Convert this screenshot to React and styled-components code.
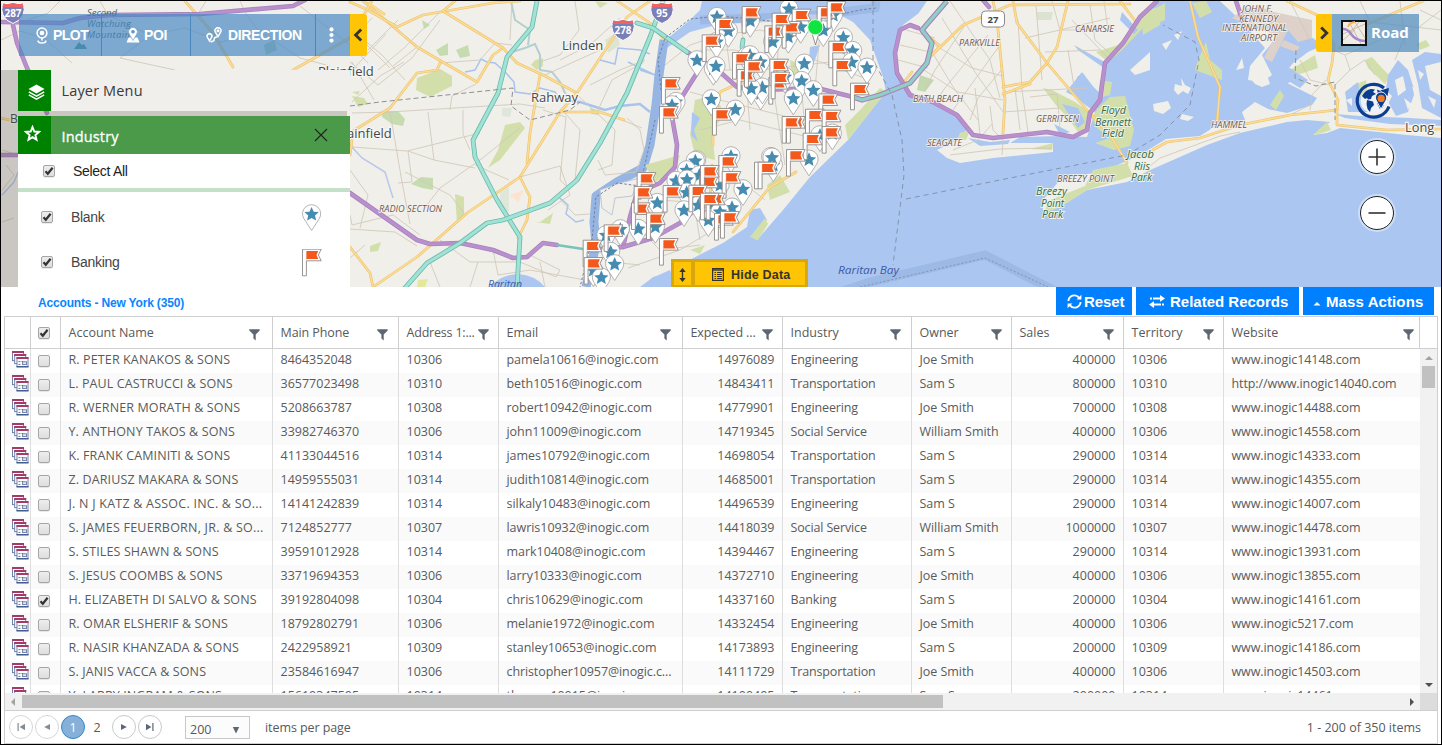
import React from "react";
import styled, { createGlobalStyle, css } from "styled-components";

const UI = `"Open Sans", "Noto Sans", sans-serif`;
const ARIAL = `"Liberation Sans", Arial, sans-serif`;

const GlobalStyle = createGlobalStyle`
  * { box-sizing: border-box; }
  body { margin: 0; background: #fff; font-family: ${UI}; color: #5a5a5a; }
  #root { height: 745px; }
`;

const Screen = styled.div`
  width: 1442px;
  height: 745px;
  border: 1px solid #000;
  overflow: hidden;
  display: flex;
  flex-direction: column;
  background: #fff;
`;

/* ---------- map ---------- */

const MapPanel = styled.section`
  position: relative;
  height: 286px;
  flex: none;
  overflow: hidden;
`;
const MapSvg = styled.svg`
  display: block;
  width: 1440px;
  height: 286px;
`;

const WATER = "#abc7f1";
const LAND = "#f1efea";
const GREEN = "#d3dfab";

const Road = ({ d, kind }) => {
  const k = {
    teal: ["#68b9ad", 4.8, "#a0e2d4", 3.2],
    purple: ["#a683bb", 4.6, "#b98fcd", 3.2],
    orange: ["#ecc069", 2.7, "#fbdc94", 1.6],
  }[kind];
  return (
    <g fill="none" strokeLinejoin="round" strokeLinecap="round">
      <path d={d} stroke={k[0]} strokeWidth={k[1]} />
      <path d={d} stroke={k[2]} strokeWidth={k[3]} />
    </g>
  );
};

const minorRoads = [
  "M1 40L20 31L44 38L72 63M60 1L48 13L22 22M100 1L108 15L150 35L185 28L222 42M150 35L120 58L175 70M222 42L258 30L300 58L330 66M240 1L246 14L258 30M198 14L206 1M300 6L350 45L368 63",
  "M350 62L378 85L412 58L440 20M350 28L382 55L405 80M368 50L398 20M352 102L380 76L404 62M362 40L390 68M372 18L350 42M386 34L356 66M440 12L404 48L378 70M417 47L393 66",
  "M352 147L407 151L480 133M352 113L390 112L520 104L545 108M390 112L402 182L410 224M408 151L412 182L398 183M428 112L434 160L475 168M463 110L463 134L470 150M434 160L408 151M350 215L352 225L393 215L420 235M440 63L480 60L495 43L512 45M450 110L452 96L476 84M426 206L440 188L480 160L520 128M520 177L560 166L570 195L548 210M543 110L566 117L560 180L570 190M475 165L509 180M464 213L450 195L405 172",
  "M575 1L579 30L560 55L540 62M512 1L510 40M620 18L590 45L560 60M545 75L600 50M590 85L620 70L645 60M575 93L615 130L612 165L598 170M627 118L640 130L644 150L636 172L605 175L598 160M617 118L642 128M564 112L580 130L575 180M440 240L470 262L520 262L556 277L560 270L530 255M540 262L545 287M470 287L478 262M493 250L498 275L530 270L585 280M430 262L440 287M350 229L395 232L417 246M556 195L575 215L590 214",
  "M665 65L690 45L720 35L760 30L800 40M690 92L720 100L760 110L800 120L840 118M700 130L740 120L780 130L820 140M740 10L745 60L750 130M780 20L775 100L785 165M820 30L815 90M720 70L760 70L830 62M640 230L660 250L700 245M628 268L680 250L730 220M690 180L700 240M610 262L640 265M660 200L730 205M740 180L765 200M815 60L870 80M598 110L612 80L644 62M700 50L735 50L770 62M725 30L730 70M800 70L805 130L820 150",
  "M906 30L935 38M900 45L930 52M898 60L928 68M950 1L990 60L1000 98M942 18L975 72L1003 112M932 52L955 90L978 120M965 25L935 70L925 90M988 35L945 88L938 98M1000 45L960 100L953 110M1003 68L978 98L970 120M924 70L958 92L1003 100M935 45L972 68L1003 76M975 88L980 134M1003 92L1088 88M1018 20L1022 90L1028 132M1036 5L1042 80M1052 1L1060 30L1110 18M1045 52L1100 50M1025 38L1060 30L1092 30M1068 50L1075 92M1090 5L1095 40L1113 56M1104 1L1108 30M1072 20L1110 60M1030 97L1057 94L1060 128M950 155L1000 149L1052 148M953 150L978 140L992 124M990 106L993 130L1003 140L1002 155M1003 112L1060 108M1015 88L1020 130",
  "M1290 1L1310 40L1345 55L1380 40M1345 55L1350 70L1335 85M1300 60L1310 80L1330 85M1360 1L1370 22L1441 30M1400 1L1405 45M1420 10L1441 20M1310 110L1312 95L1326 80M1290 115L1310 105M1350 70L1365 60L1375 75M1395 60L1405 35M1150 166L1160 158L1220 136L1240 132M1441 10L1418 28",
  "M2 150L18 155M2 222L14 218M2 190L14 175L6 165M350 170L368 195L360 228M352 62L374 100M365 245L350 258",
];

const orangeRoads = [
  "M363 1L417 47L477 82L493 55L503 48",
  "M350 2L368 10L397 27L423 15L493 3L520 1",
  "M455 1L443 11L503 48L517 63L543 75L577 93",
  "M350 133L390 108L417 73L437 70L440 63",
  "M540 75L530 133L527 163",
  "M650 1L627 17L577 93L560 112L520 177L467 213L417 257L373 287",
  "M520 177L530 197L527 220L518 238",
  "M560 112L600 112L624 120",
  "M617 1L650 23L665 40",
  "M350 247L370 273L373 287",
  "M352 140L350 155",
  "M185 1L213 33L233 67",
  "M368 3L384 14M293 70L350 38L372 1",
  "M1 118L18 122",
  "M1013 1L1017 23L1047 63L1087 110L1110 135L1127 163",
  "M993 1L997 20L1005 100L1003 133",
  "M904 82L912 72M918 28L940 46L930 57M930 57L963 25L1010 5L1130 4",
  "M1003 87L1030 82L1047 63L1057 47L1068 1M1003 94L1030 84",
  "M1120 1L1136 22",
  "M1190 1L1198 37L1220 87L1217 123",
  "M1140 157L1167 142L1200 138L1240 125L1290 115L1337 110L1338 100L1328 80L1332 63L1334 45L1317 15L1287 1",
  "M1337 110L1337 125L1387 130L1441 129",
  "M1340 48L1353 30L1423 1",
  "M713 145L713 127L720 92L745 80L790 90",
  "M712 165L710 200M733 232L770 187L796 172",
];

const tealRoads = [
  "M537 1L532 27L507 57L498 93L473 140L475 157L497 200L520 237L517 287",
  "M663 1L650 37L627 93L600 143L577 180L550 203L503 220L487 223L460 243L427 263L403 290",
  "M637 23L653 28L687 52",
  "M743 40L742 47",
];

const purpleRoads = [
  "M1 22L63 23L80 18L110 15L200 14L293 6L305 0",
  "M13 25L17 43L27 68L47 113",
  "M1 155L18 155",
  "M350 193L417 240L430 244L460 243L493 250L513 258L527 257L543 243L557 245",
  "M697 73L680 100L672 117L677 145L675 167L660 183L637 193L630 217L623 247",
  "M587 250L623 247L653 238L680 223L700 205",
  "M687 52L720 72L737 87L760 90L817 88L853 97",
  "M918 28L910 25L900 30L895 53L897 73L910 95L933 102L957 115L973 135L993 138L1047 132L1073 137L1087 130L1090 113L1100 100L1105 63L1123 43L1140 17L1157 1",
  "M983 0L989 7",
  "M1236 1L1243 22",
];

const STAR = "M0 -7L2.1 -2.3L7.2 -1.9L3.4 1.5L4.5 6.6L0 3.9L-4.5 6.6L-3.4 1.5L-7.2 -1.9L-2.1 -2.3Z";

const StarPin = ({ x, y }) => (
  <g transform={`translate(${x} ${y})`}>
    <path d="M0 16.5L-7.6 4.8A9.1 9.1 0 1 1 7.6 4.8Z" fill="#fff" stroke="#a3a19f" strokeWidth="0.8" />
    <path d={STAR} fill="#458cb0" />
  </g>
);
const FlagPin = ({ x, y }) => (
  <g transform={`translate(${x} ${y})`}>
    <path d="M-9.5 -5.8H9.2L6.4 0L9.2 5.8H-5.6V20.8H-9.5Z" fill="#fff" stroke="#8d8986" strokeWidth="0.9" />
    <path d="M-5.6 5.5V-3.5" stroke="#bbb" strokeWidth="0.6" />
    <path d="M-5.5 -4.1H6.2L4.5 0L6.2 4.1H-5.5Z" fill="#f4581b" />
  </g>
);

const at = (ox, oy) => ([x, y]) => [ox + x / 3, oy + y / 3];
const upper = at(570, 0);
const lower = at(570, 140);

const starPins = [
  ...[[441,50],[475,92],[440,125],[541,62],[657,26],[790,45],[655,110],[608,125],[692,80],[760,90],[820,112],[848,152],[845,186],[891,202],[381,180],[430,206],[438,198],[530,168],[540,165],[572,185],[703,190],[695,242],[730,270],[645,230],[670,295],[572,280],[577,262],[544,265],[424,297],[496,328],[318,305],[306,315],[750,405],[787,400]].map(upper),
  ...[[380,60],[376,62],[483,48],[610,75],[602,50],[606,52],[717,58],[350,90],[318,122],[388,105],[351,118],[350,157],[450,135],[519,147],[262,188],[385,195],[342,210],[430,190],[486,202],[450,215],[415,240],[256,260],[205,266],[151,267],[108,285],[122,335],[70,390],[134,372],[94,412]].map(lower),
];
const flagPins = [
  ...[[545,37],[465,72],[425,122],[695,45],[665,82],[613,95],[635,57],[770,37],[800,22],[530,226],[516,175],[552,199],[625,250],[628,195],[632,234],[805,141],[817,195],[870,267],[303,250],[297,337],[456,343],[775,299],[735,345],[785,348],[678,367],[665,367],[785,397],[728,417]].map(upper),
  ...[[475,64],[417,126],[420,94],[485,112],[582,84],[593,84],[678,46],[230,115],[213,206],[221,157],[308,154],[385,153],[437,177],[420,177],[258,236],[131,272],[68,318],[71,370],[462,238],[480,232],[297,313]].map(lower),
];

const labels = [
  { x: 562, y: 50, s: 13, t: "Linden" },
  { x: 531, y: 102, s: 13, t: "Rahway" },
  { x: 318, y: 76, s: 13, t: "Plainfield" },
  { x: 336, y: 138, s: 13, t: "Plainfield" },
  { x: 10, y: 123, s: 12, t: "B" },
  { x: 1405, y: 132, s: 12.8, t: "Long" },
];
const italics = [
  { x: 379, y: 212, w: 63, t: "RADIO SECTION" },
  { x: 959, y: 46, w: 41, t: "PARKVILLE" },
  { x: 1075, y: 32, w: 39, t: "CANARSIE" },
  { x: 913, y: 102, w: 50, t: "BATH BEACH" },
  { x: 927, y: 146, w: 35, t: "SEAGATE" },
  { x: 1036, y: 122, w: 43, t: "GERRITSEN" },
  { x: 1057, y: 182, w: 57, t: "BREEZY POINT" },
  { x: 1211, y: 128, w: 36, t: "HAMMEL" },
  { x: 1242, y: 12, w: 31, t: "JOHN F." },
  { x: 1239, y: 21.5, w: 39, t: "KENNEDY" },
  { x: 1222, y: 31, w: 65, t: "INTERNATIONAL" },
  { x: 1241, y: 41, w: 36, t: "AIRPORT" },
];
const parks = [
  { x: 1101, y: 114, w: 25, t: "Floyd" },
  { x: 1095, y: 126, w: 36, t: "Bennett" },
  { x: 1102, y: 137, w: 22, t: "Field" },
  { x: 1127, y: 158, w: 27, t: "Jacob" },
  { x: 1134, y: 170, w: 16, t: "Riis" },
  { x: 1131, y: 181, w: 21, t: "Park" },
  { x: 1036, y: 195, w: 31, t: "Breezy" },
  { x: 1041, y: 207, w: 23, t: "Point" },
  { x: 1042, y: 218, w: 21, t: "Park" },
];

const Shield = ({ x, y, n }) => (
  <g transform={`translate(${x} ${y})`}>
    <path d="M-10 -9Q-5 -7.5 0 -9.5Q5 -7.5 10 -9Q12.5 -2 10 3Q7 9 0 11.5Q-7 9 -10 3Q-12.5 -2 -10 -9Z" fill="#7b7fb8" stroke="#fff" strokeWidth="1" />
    <path d="M-9.6 -8.6Q-5 -7 0 -9Q5 -7 9.6 -8.6L10.6 -5H-10.6Z" fill="#ee6465" />
    <text x="0" y="5.2" textAnchor="middle" fontFamily={UI} fontWeight="700" fontSize="10" fill="#fff">{n}</text>
  </g>
);

const VERRAZZANO = "M853 97L862 100L880 95L910 83L927 63L932 43L922 30L947 1";

const MapCanvas = () => (
  <MapSvg viewBox="1 1 1440 286" aria-label="Map">
    <rect x="1" y="1" width="1440" height="286" fill={LAND} />
    {/* parks west of the bay */}
    <g fill={GREEN}>
      <path d="M417 78L440 69L452 76L452 86L430 97L416 90Z" />
      <path d="M436 50L448 43L448 55L440 56ZM456 50L468 45L470 56L460 58ZM422 20L430 25L424 29Z" fill="#c6dcb0" />
      <path d="M382 111L398 111L405 119L403 126L392 124L382 117ZM411 184L421 177L433 178L433 190L422 188Z" fill="#c6dcb0" />
      <path d="M455 194L464 197L464 215L457 223Z" />
      <path d="M505 125L520 122L525 128L500 160L488 168L498 150Z" />
      <path d="M540 222L553 213L550 224L535 222ZM535 60L543 58L543 66L537 70L531 65ZM590 108L602 111L598 115L591 114Z" />
      <path d="M370 246L381 242L378 251L370 252ZM352 96L364 98L368 104L358 107ZM352 92L360 91L358 95ZM595 1L608 3L600 8Z" />
      <path d="M605 40L617 32L620 45L608 53Z" fill="#dde5d0" />
      <path d="M500 193L509 187L509 212L500 208ZM502 108L512 108L510 117L502 116Z" fill="#dfe6da" />
      <path d="M264 45L274 40L277 50L266 55Z" fill="#b8d0b0" />
      <path d="M418 280L428 279L425 287L417 287Z" fill="#e3e89c" />
    </g>
    <path d="M510 195L524 190L518 202Z" fill="#fbe3cf" />
    <g fill="none" stroke="#a9c3ec" strokeWidth="1.5">
      <path d="M465 72L475 70L481 59L487 62L495 63L506 73L514 82L515 92L530 94L540 88L555 92L562 103" />
      <path d="M512 52L525 48L535 44L540 55L540 70L552 72L560 82L566 95M511 1L515 20L530 30L528 45" stroke="#b5cfd0" strokeWidth="2" />
      <path d="M562 100L580 102L605 110L620 106L640 104L650 112" strokeWidth="2.4" />
      <path d="M600 60L615 64L618 48L640 50L650 54M628 62L640 68L655 75L640 70M560 198L568 205L566 214L576 222L584 220" />
      <path d="M350 145L362 158L385 172L393 198M2 195L14 182L18 172" stroke="#b9c7e8" />
    </g>
    {/* water bodies */}
    <g fill={WATER}>
      <path d="M664 50L668 38L690 20L700 10L702 1L920 1L960 1L1441 1V138L1441 287H643L653 277L670 273L680 265L703 253L723 243L747 227L750 210L760 208L767 220L752 237L757 240L783 210L810 177L848 140L877 103L886 92L883 77L870 40L853 22L840 15L787 14L757 22L720 24L690 32Z" />
      <path d="M490 287Q500 275 518 274Q535 275 545 287Z" />
      <path d="M640 287L652 278L670 270L676 287Z" />
    </g>
    <path d="M664 40L659 75L656 105L650 145L643 168L617 182L596 196L594 222L596 245L586 287" fill="none" stroke="#97b5e2" strokeWidth="9" strokeLinejoin="round" />
    <path d="M600 190L620 183L640 178L632 196L615 198L612 215L602 208Z" fill={LAND} stroke="#bcc8d8" strokeWidth="1" />
    {/* Staten Island parks */}
    <g fill={GREEN}>
      <path d="M695 100L715 95L725 115L712 130L715 160L695 155L690 135Z" />
      <path d="M645 165L680 155L675 172L655 182Z" />
      <path d="M767 185L780 175L790 192L770 200ZM750 237L765 218L768 224L758 240ZM848 140L877 103L887 92L880 88L860 110L845 125Z" />
      <path d="M790 60L802 65L800 85L792 80ZM690 250L705 245L700 254Z" />
    </g>
    <g fill={WATER}>
      <path d="M810 47L820 45L815 60L808 72Z" />
      <path d="M692 112L700 118L694 130L698 142L691 135Z" />
    </g>
    {/* Brooklyn */}
    <path d="M943 1L927 7L903 25L897 40L895 67L905 85L915 97L933 103L957 117L967 130L953 142L937 150L947 158L960 163L993 158L1053 152L1053 143L1010 143L1020 137L1060 136L1087 137L1095 112L1076 98L1077 77L1083 73L1092 85L1101 97L1105 60L1127 40L1140 17L1160 1Z" fill={LAND} />
    <path d="M927 1L945 1L932 12L925 9L918 14Z" fill={LAND} />
    <g fill={GREEN}>
      <path d="M920 75L934 80L925 92L917 90Z" fill="#c4d8b0" />
      <path d="M1036 12L1053 12L1051 20L1038 20Z" fill="#dae3cf" />
      <path d="M1043 88L1052 90L1075 102L1090 112L1087 130L1078 132L1068 118L1055 104Z" />
      <path d="M1098 108L1110 97L1125 96L1134 130L1130 146L1114 150L1095 143L1110 138L1097 128L1092 118Z" />
      <path d="M1100 80L1112 82L1110 95L1098 98Z" />
      <path d="M1096 52L1118 45L1130 32L1142 18L1145 26L1120 52L1108 62Z" />
      <path d="M1135 22L1150 12L1165 3L1165 20L1145 28Z" />
      <path d="M960 133L970 130L966 140L957 140ZM1030 149L1053 143L1052 150Z" />
    </g>
    <g fill={WATER}>
      <path d="M1066 92L1082 72L1086 80L1102 95L1092 98L1078 98ZM1074 45L1108 64L1104 68L1078 50ZM1062 104L1078 108L1085 122L1078 128L1070 116ZM1122 12L1138 30L1134 34L1120 20Z" />
      <path d="M1054 124L1070 132L1060 135ZM968 138L990 142L1010 140L1008 144L980 146Z" />
    </g>
    {/* Rockaway and Long Island */}
    <path d="M1043 213L1043 200L1060 180L1093 173L1113 167L1140 155L1166 139L1200 136L1222 122L1240 124L1262 108L1287 113L1312 105L1317 98L1297 88L1285 82L1289 68L1302 52L1322 44L1300 30L1286 26L1262 55L1272 75L1262 82L1248 80L1250 66L1265 48L1240 20L1220 1L1441 1V138L1407 135L1340 128L1327 133L1313 135L1330 122L1307 120L1287 122L1240 133L1207 145L1173 160L1150 170L1127 182L1087 190L1060 207Z" fill={LAND} />
    <g fill={GREEN}>
      <path d="M1043 213L1050 200L1085 186L1093 170L1127 163L1133 176L1087 190L1060 207Z" />
      <path d="M1313 135L1327 122L1331 130L1322 133ZM1290 70L1315 55L1318 68L1300 74ZM1365 60L1372 57L1382 68L1390 76L1385 84L1368 68Z" />
      <path d="M1198 60L1206 42L1210 60L1222 70L1222 80L1195 70ZM1270 105L1280 90L1284 96L1276 110ZM1145 12L1163 5L1160 25L1143 35L1142 22ZM1192 3L1206 1L1212 12L1200 18Z" />
      <path d="M1366 80L1352 86L1358 98L1350 106L1360 100L1368 95Z" />
      <path d="M1416 44L1426 40L1430 46L1420 50Z" />
    </g>
    <path d="M1242 10L1258 6L1274 12L1312 20L1312 38L1298 42L1288 30L1272 62L1264 58L1276 34L1260 30L1232 18Z" fill="#ddd1ca" />
    <path d="M1284 40L1300 47L1296 52L1280 46Z" fill="#ddd1ca" />
    <g fill={LAND}>
      <path d="M1130 70L1150 52L1150 70L1135 75ZM1153 104L1168 101L1171 108L1163 114L1154 111ZM1182 114L1194 117L1188 121L1180 119ZM1162 44L1172 40L1166 50ZM1236 70L1242 58L1244 68ZM1242 112L1255 102L1270 110L1265 118L1245 120ZM1174 35L1182 31L1178 40Z" />
      <path d="M1175 84L1182 86L1181 78L1185 85L1191 88L1188 94L1183 91L1178 95L1174 90ZM1266 72L1270 84L1262 87L1255 84L1250 78Z" />
    </g>
    <g fill={WATER}>
      <path d="M1335 114L1360 116L1410 118L1441 120V126L1390 124L1345 118ZM1345 92L1358 82L1360 96L1370 112L1348 112ZM1388 75L1398 60L1408 70L1415 92L1408 112L1396 116L1385 96ZM1412 60L1425 52L1441 54V62L1425 66L1430 90L1441 96V118L1422 108L1418 84ZM1290 68L1296 72L1308 80L1300 88L1290 82L1278 88L1280 72ZM1300 46L1333 40L1326 44L1308 52L1292 64Z" />
    </g>
    <g fill={LAND}>
      <path d="M1395 80L1403 76L1406 90L1398 96ZM1430 66L1438 64L1436 76L1428 78ZM1428 96L1436 100L1434 108ZM1404 98L1412 104L1408 110ZM1386 90L1392 96L1388 104ZM1346 100L1352 98L1352 106ZM1418 70L1424 74L1420 80ZM1412 86L1418 92L1415 98Z" />
    </g>
    {/* streets */}
    <g fill="none" stroke="#d0c8b8" strokeWidth="0.85" strokeLinejoin="round">
      {minorRoads.map((d) => <path key={d} d={d} />)}
    </g>
    <g>{orangeRoads.map((d) => <Road key={d} d={d} kind="orange" />)}</g>
    <g>{purpleRoads.map((d) => <Road key={d} d={d} kind="purple" />)}</g>
    <g>{tealRoads.map((d) => <Road key={d} d={d} kind="teal" />)}</g>
    <path d="M557 245L583 249L592 250" fill="none" stroke="#78c3b6" strokeWidth="2.6" />
    <path d={VERRAZZANO} fill="none" stroke="#a683bb" strokeWidth="5.4" strokeLinejoin="round" />
    <path d={VERRAZZANO} fill="none" stroke="#8ed0c6" strokeWidth="3.2" strokeLinejoin="round" />
    {/* boundaries */}
    <g fill="none" stroke="#8ba8d6" strokeWidth="9" strokeOpacity="0.45">
      <path d="M840 292L870 282L985 255L1055 291M700 20L810 16L875 8L876 1" />
    </g>
    <g fill="none" stroke="#8592ae" strokeWidth="1">
      <path d="M860 287L985 258L1048 287" strokeDasharray="2 2" />
      <path d="M873 1L873 60L892 95L902 140L904 175L893 265" strokeDasharray="5 4" />
      <path d="M906 199L1000 180L1127 155L1160 135L1190 105L1199 60L1195 42L1163 25" strokeDasharray="5 4" />
      <path d="M661 90L658 60L665 38L690 19L720 16L800 24L860 10L876 8M655 120L646 160L640 186L617 183L596 197L592 240L580 287" strokeDasharray="2.5 2" stroke="#6f7f9f" />
      <path d="M350 106L380 102L513 88L511 106L530 120L570 110L580 102M1296 50L1295 78L1316 86L1335 82L1335 120" strokeDasharray="5 3" stroke="#91908e" />
    </g>
    {/* labels */}
    <g fontFamily={UI} fill="#45494a" stroke="#f7f6f3" strokeWidth="2.4" paintOrder="stroke">
      {labels.map((l) => <text key={l.t + l.y} x={l.x} y={l.y} fontSize={l.s}>{l.t}</text>)}
    </g>
    <g fontFamily={UI} fontStyle="italic" fontSize="9.3" fill="#6f5851" stroke="#f4f2ee" strokeWidth="1.6" paintOrder="stroke">
      {italics.map((l) => <text key={l.t} x={l.x} y={l.y} textLength={l.w} lengthAdjust="spacingAndGlyphs">{l.t}</text>)}
    </g>
    <g fontFamily={UI} fontStyle="italic" fontSize="11" fill="#34684b" stroke="#eef3e4" strokeWidth="1.8" paintOrder="stroke">
      {parks.map((l) => <text key={l.t + l.x} x={l.x} y={l.y} textLength={l.w} lengthAdjust="spacingAndGlyphs">{l.t}</text>)}
    </g>
    <g fontFamily={UI} fontStyle="italic" fontSize="9.5" fill="#42605c">
      <text x="87" y="16" textLength="30">Second</text>
      <text x="87" y="27" textLength="44">Watchung</text>
      <text x="87" y="38" textLength="43">Mountain</text>
      <path d="M74 49L79 42L82 45L84 44L87 49Z" fill="#4b8f84" />
    </g>
    <g fontFamily={UI} fontStyle="italic" fontSize="11.5" fill="#3c59a6">
      <text x="838" y="274" textLength="61" lengthAdjust="spacingAndGlyphs">Raritan Bay</text>
      <text x="488" y="288" textLength="34" lengthAdjust="spacingAndGlyphs">Raritan</text>
    </g>
    <Shield x={13} y={12} n="287" />
    <Shield x={662} y={12} n="95" />
    <Shield x={623} y={29} n="278" />
    <rect x="981.5" y="11" width="23" height="16" rx="4" fill="#fff" stroke="#8b8b8b" />
    <text x="993" y="22.6" textAnchor="middle" fontFamily={UI} fontWeight="700" fontSize="9.5" fill="#444">27</text>
    {/* markers */}
    {starPins.map(([x, y], i) => <StarPin key={i} x={x} y={y} />)}
    {flagPins.map(([x, y], i) => <FlagPin key={i} x={x} y={y} />)}
    <path d="M812 33L815.5 45L819 33Z" fill="#fff" stroke="#777" strokeWidth="0.8" />
    <circle cx="815.3" cy="27.2" r="7.6" fill="#0ee63f" stroke="#d9fbe0" strokeWidth="1" />
  </MapSvg>
);

/* ---------- map overlays ---------- */

const Toolbar = styled.div`
  position: absolute;
  left: 18px;
  top: 13px;
  height: 42px;
  display: flex;
`;
const ToolButton = styled.button`
  width: ${(p) => p.$w}px;
  padding: 0 0 0 ${(p) => p.$pad || 0}px;
  border: 0;
  border-right: ${(p) => (p.$last ? "0" : "1px solid #4a87be")};
  background: rgba(72, 136, 196, 0.69);
  color: #fff;
  display: flex;
  align-items: center;
  gap: ${(p) => p.$gap || 4}px;
  font: 700 14px ${ARIAL};
  letter-spacing: ${(p) => p.$ls || 0}px;
  white-space: nowrap;
`;
const CollapseTab = styled.button`
  width: ${(p) => p.$w}px;
  padding: 0 ${(p) => (p.$side === "right" ? 2 : 0)}px 0 0;
  border: 0;
  background: #ffc403;
  border-radius: ${(p) => (p.$side === "left" ? "3px 0 0 3px" : "0 3px 3px 0")};
  display: flex;
  align-items: center;
  justify-content: center;
`;

const RoadSwitch = styled.div`
  position: absolute;
  left: 1315px;
  top: 13px;
  height: 38px;
  display: flex;
`;
const RoadButton = styled.div`
  width: 87px;
  background: rgba(80, 140, 190, 0.72);
  display: flex;
  align-items: center;
  padding-left: 9px;
  gap: 4px;
  color: #fff;
  font: 700 15px ${UI};
  line-height: 1;
`;
const RoadLabel = styled.span`
  position: relative;
  top: -1px;
`;

const SideShade = styled.div`
  position: absolute;
  left: 0;
  top: 69px;
  width: 346px;
  height: 217px;
  background: rgba(75, 70, 65, 0.23);
`;
const LayerPanel = styled.div`
  position: absolute;
  left: 17px;
  top: 69px;
  width: 332px;
  height: 217px;
  overflow: hidden;
  display: flex;
  flex-direction: column;
`;
const LayerHeader = styled.div`
  height: ${(p) => p.$h}px;
  flex: none;
  margin-bottom: ${(p) => p.$gap || 0}px;
  display: flex;
  align-items: center;
  background: ${(p) => p.$bg};
  color: ${(p) => p.$color};
  font-size: 14.5px;
  letter-spacing: ${(p) => p.$ls || 0}px;
  -webkit-text-stroke: ${(p) => (p.$bold ? "0.3px" : "0")};
`;
const LayerTitle = styled.span`
  padding-top: ${(p) => p.$drop || 0}px;
`;
const LayerIcon = styled.div`
  width: 33px;
  height: 100%;
  margin-right: 10.5px;
  background: #008201;
  display: flex;
  justify-content: center;
  padding: ${(p) => p.$pad};
`;
const CloseIcon = styled.svg`
  margin-left: auto;
  margin-right: 22px;
`;
const SelectAllRow = styled.label`
  height: 38px;
  flex: none;
  border-bottom: 4px solid #c5e0c8;
  background: #fff;
  display: flex;
  align-items: center;
  padding-left: 25px;
  gap: 18px;
  font: 14px ${ARIAL};
  letter-spacing: -0.3px;
  color: #222;
`;
const LayerList = styled.div`
  flex: 1;
  background: #fff;
  padding-top: 2px;
`;
const LayerRow = styled.label`
  height: 45px;
  display: flex;
  align-items: center;
  padding: 0 28px 0 23px;
  gap: 18px;
  font: 14px ${ARIAL};
  letter-spacing: -0.3px;
  color: #444;
`;
const LegendIcon = styled.svg`
  margin-left: auto;
  margin-top: ${(p) => p.$drop || 0}px;
`;

const Box = styled.span`
  width: 12px;
  height: 12px;
  flex: none;
  border: 1px solid #a5a5a5;
  border-radius: 2px;
  background: linear-gradient(#ededed, #dedede);
  box-shadow: 0 1px 0 rgba(0, 0, 0, 0.08);
  display: flex;
  align-items: center;
  justify-content: center;
`;
const Check = ({ on }) => (
  <Box>
    {on && (
      <svg width="10" height="10" viewBox="0 0 10 10">
        <path d="M1.5 5.3L3.8 7.8L8.6 1.8" fill="none" stroke="#333" strokeWidth="2.2" />
      </svg>
    )}
  </Box>
);

const GlobeBadge = styled.svg`
  position: absolute;
  left: 1353px;
  top: 80px;
`;
const ZoomStack = styled.div`
  position: absolute;
  left: 1359px;
  top: 139px;
  display: flex;
  flex-direction: column;
  gap: 22px;
`;
const ZoomButton = styled.button`
  width: 34px;
  height: 34px;
  padding: 0;
  border: 1.5px solid #222;
  border-radius: 50%;
  background: #fff;
  box-shadow: 0 0 0 2px rgba(255, 255, 255, 0.4);
  display: flex;
  align-items: center;
  justify-content: center;
`;

const HideBar = styled.div`
  position: absolute;
  left: 670px;
  top: 258px;
  width: 137px;
  height: 28px;
  padding: 3px 3px 2px;
  background: #d8a70b;
  display: flex;
  gap: 4px;
`;
const HideButton = styled.button`
  width: ${(p) => p.$w}px;
  border: 0;
  padding: 2px 0 0 ${(p) => p.$pad || 0}px;
  background: #ffc403;
  display: flex;
  align-items: center;
  gap: 7px;
  font: 700 12.5px ${ARIAL};
  letter-spacing: 0.2px;
  color: #333;
`;

/* ---------- grid ---------- */

const DataArea = styled.section`
  flex: 1;
  display: flex;
  flex-direction: column;
  padding: 0 3px 0 3px;
`;
const DataHeader = styled.header`
  height: 29px;
  display: flex;
  align-items: flex-start;
  padding-right: 4px;
  gap: 4px;
`;
const DataTitle = styled.h2`
  margin: 1px auto 0 34px;
  font: 700 12px/30px ${ARIAL};
  letter-spacing: -0.17px;
  color: #0a84ff;
`;
const ActionButton = styled.button`
  width: ${(p) => p.$w}px;
  height: 28px;
  border: 0;
  padding: 1px 0 0 ${(p) => p.$pad}px;
  background: #0080ff;
  color: #fff;
  display: flex;
  align-items: center;
  gap: ${(p) => p.$gap}px;
  font: 700 15px ${ARIAL};
  letter-spacing: ${(p) => p.$ls || 0}px;
  white-space: nowrap;
`;
const Grid = styled.div`
  width: 1434px;
  height: 428px;
  border: 1px solid #cfcfcf;
  font-size: 12.5px;
  display: flex;
  flex-direction: column;
`;
const cols = "26px 30px 212px 126px 100px 184px 100px 129px 100px 112px 100px 196px";
const HeadRow = styled.div`
  height: 32px;
  flex: none;
  display: grid;
  grid-template-columns: ${cols} 17px;
  border-bottom: 1px solid #cfcfcf;
`;
const HeadCell = styled.div`
  border-right: 1px solid #cfcfcf;
  display: flex;
  align-items: center;
  padding: 0 ${(p) => p.$right || 12}px 0 ${(p) => (p.$center ? 7 : 7.5)}px;
  justify-content: space-between;
  white-space: nowrap;
  overflow: hidden;
  color: #58595b;
  letter-spacing: ${(p) => p.$ls || 0}px;
  &:last-child { border-right: 0; }
`;
const FilterIcon = styled.svg`
  flex: none;
  margin-top: 4px;
`;
const Viewport = styled.div`
  height: 344px;
  flex: none;
  display: flex;
`;
const Rows = styled.div`
  width: 1415px;
  height: 344px;
  overflow: hidden;
`;
const Row = styled.div`
  height: 24px;
  display: grid;
  grid-template-columns: ${cols};
  background: ${(p) => (p.$alt ? "#fafafa" : "#fff")};
`;
const Cell = styled.div`
  border-right: 1px solid #dedede;
  padding: ${(p) => (p.$icon ? "2px 0 0 7px" : p.$box ? "6px 0 0 7px" : "0 7.5px 0 7.5px")};
  line-height: 21px;
  white-space: nowrap;
  overflow: hidden;
  letter-spacing: ${(p) => p.$ls || 0}px;
  ${(p) => p.$num && css`text-align: right;`}
  &:last-child { border-right: 0; }
`;
const VScroll = styled.div`
  width: 17px;
  background: #f1f1f1;
  display: flex;
  flex-direction: column;
  align-items: center;
`;
const HScroll = styled.div`
  height: 17px;
  flex: none;
  background: #f1f1f1;
  display: flex;
  align-items: center;
`;
const Arrow = styled.span`
  width: 17px;
  height: 17px;
  display: flex;
  align-items: center;
  justify-content: center;
  ${(p) => p.$push && css`margin-${p.$push}: auto;`}
`;
const Thumb = styled.span`
  width: ${(p) => p.$w}px;
  height: ${(p) => p.$h}px;
  background: #c1c1c1;
`;
const Corner = styled.span`
  width: 17px;
  height: 17px;
  background: #dcdcdc;
`;
const Pager = styled.footer`
  flex: 1;
  border-top: 1px solid #cfcfcf;
  display: flex;
  align-items: center;
  padding: 0 16px 0 4px;
  color: #58595b;
`;
const PageButton = styled.button`
  width: 24px;
  height: 24px;
  margin-right: 2px;
  padding: 0;
  border: 1px solid #c9c9c9;
  border-radius: 50%;
  background: #fff;
  opacity: ${(p) => (p.$off ? 0.75 : 1)};
  display: flex;
  align-items: center;
  justify-content: center;
`;
const CurrentPage = styled.span`
  width: 24px;
  height: 24px;
  margin: 0 1px 0 0;
  border-radius: 50%;
  border: 1px solid #3189c9;
  background: #86b0d8;
  color: #fff;
  display: flex;
  align-items: center;
  justify-content: center;
`;
const PageLink = styled.span`
  width: 26px;
  padding-right: 4px;
  text-align: center;
`;
const SizeSelect = styled.div`
  width: 65px;
  height: 23px;
  margin: 1px 15px 0 21px;
  padding: 4px 8px 0 4px;
  border: 1px solid #c8c8c8;
  background: #fcfcfc;
  display: flex;
  align-items: center;
  justify-content: space-between;
`;
const PagerInfo = styled.span`
  margin-left: auto;
`;
const PagerText = styled.span`
  letter-spacing: -0.08px;
`;

const headers = [
  ["Account Name", 12.5], ["Main Phone", 10.5, -0.1], ["Address 1:...", 9.5, -0.2], ["Email", 11.5], ["Expected ...", 9.5, -0.1],
  ["Industry", 10.5], ["Owner", 9.5], ["Sales", 9.5], ["Territory", 9.5, 0.05], ["Website", 5.5],
];

/* tracking of each column's values */
const tracking = [0.12, 0, 0, -0.04, 0, -0.14, -0.04, 0, 0, -0.09];

const data = `R. PETER KANAKOS & SONS|8464352048|10306|pamela10616@inogic.com|14976089|Engineering|Joe Smith|400000|10306|www.inogic14148.com
L. PAUL CASTRUCCI & SONS|36577023498|10310|beth10516@inogic.com|14843411|Transportation|Sam S|800000|10310|http://www.inogic14040.com
R. WERNER MORATH & SONS|5208663787|10308|robert10942@inogic.com|14779901|Engineering|Joe Smith|700000|10308|www.inogic14488.com
Y. ANTHONY TAKOS & SONS|33982746370|10306|john11009@inogic.com|14719345|Social Service|William Smith|400000|10306|www.inogic14558.com
K. FRANK CAMINITI & SONS|41133044516|10314|james10792@inogic.com|14698054|Transportation|Sam S|290000|10314|www.inogic14333.com
Z. DARIUSZ MAKARA & SONS|14959555031|10314|judith10814@inogic.com|14685001|Transportation|Sam S|290000|10314|www.inogic14355.com
J. N J KATZ & ASSOC. INC. & SO...|14141242839|10314|silkaly10483@inogic.com|14496539|Engineering|Sam S|290000|10314|www.inogic14007.com
S. JAMES FEUERBORN, JR. & SO...|7124852777|10307|lawris10932@inogic.com|14418039|Social Service|William Smith|1000000|10307|www.inogic14478.com
S. STILES SHAWN & SONS|39591012928|10314|mark10408@inogic.com|14394467|Engineering|Sam S|290000|10314|www.inogic13931.com
S. JESUS COOMBS & SONS|33719694353|10306|larry10333@inogic.com|14372710|Engineering|Joe Smith|400000|10306|www.inogic13855.com
H. ELIZABETH DI SALVO & SONS|39192804098|10304|chris10629@inogic.com|14337160|Banking|Sam S|200000|10304|www.inogic14161.com
R. OMAR ELSHERIF & SONS|18792802791|10306|melanie1972@inogic.com|14332454|Engineering|Joe Smith|400000|10306|www.inogic5217.com
R. NASIR KHANZADA & SONS|2422958921|10309|stanley10653@inogic.com|14173893|Engineering|Sam S|200000|10309|www.inogic14186.com
S. JANIS VACCA & SONS|23584616947|10306|christopher10957@inogic.c...|14111729|Transportation|Joe Smith|400000|10306|www.inogic14503.com
Y. LARRY INGRAM & SONS|15619347595|10314|thomas10915@inogic.com|14100495|Transportation|Sam S|290000|10314|www.inogic14461.com`
  .split("\n")
  .map((line) => line.split("|"));

const spacingFor = (value, col) => {
  if (value.endsWith("...")) return col === 0 ? 0.23 : -0.1;
  return tracking[col];
};

const StackIcon = () => (
  <svg width="17" height="17" viewBox="0 0 17 17">
    {[[0, 0], [2.2, 3], [4.5, 6]].map(([x, y]) => (
      <g key={x}>
        <rect x={x + 0.5} y={y + 0.5} width="11" height="9.2" fill="#fff" stroke="#62749d" strokeWidth="0.9" />
        <rect x={x} y={y} width="12" height="2" fill="#a43a66" />
      </g>
    ))}
    <path d="M4.5 15.8H16.5" stroke="#344f86" strokeWidth="1.2" />
    <path d="M6.5 10.6H8.5M6.5 13.4H8.5M9.5 10.6H11" stroke="#62749d" />
    <rect x="10.6" y="10.8" width="3.9" height="2.8" fill="#e6ecf6" stroke="#62749d" strokeWidth="0.9" />
  </svg>
);

const Tri = ({ dir, s = 8, color = "#505050" }) => {
  const d = { left: "M6 1V9L2 5Z", right: "M3 1V9L7 5Z", up: "M1 7H9L5 3Z", down: "M1 3H9L5 7Z", drop: "M1.8 2H8.2L5 8.4Z" }[dir];
  return <svg width={s} height={s} viewBox="0 0 10 10"><path d={d} fill={color} /></svg>;
};

const Funnel = () => (
  <FilterIcon width="11" height="12" viewBox="0 0 11 12">
    <path d="M0.3 0.3H10.7V1.6L6.7 5.4V11.6L4.4 9.4V5.4L0.3 1.6Z" fill="#5d6673" />
  </FilterIcon>
);

const PageGlyph = ({ kind }) => (
  <svg width="10" height="10" viewBox="0 0 10 10" fill="#5d6673">
    {kind === "first" && <path d="M1.5 1H2.7V9H1.5ZM9 1.8V8.2L3.6 5Z" />}
    {kind === "prev" && <path d="M8 2V8L2.2 5Z" />}
    {kind === "next" && <path d="M2 2V8L7.8 5Z" />}
    {kind === "last" && <path d="M7.3 1H8.5V9H7.3ZM1 1.8V8.2L6.4 5Z" />}
  </svg>
);

export default function App() {
  return (
    <Screen>
      <GlobalStyle />
      <MapPanel>
        <MapCanvas />
        <SideShade />
        <Toolbar>
          <ToolButton $w={83} $pad={17} $gap={5} $ls={-0.55}>
            <svg width="12" height="17" viewBox="0 0 12 17" fill="none" stroke="#fff" strokeWidth="1.5">
              <circle cx="6" cy="6" r="4.9" />
              <circle cx="6" cy="6" r="1.6" fill="#fff" />
              <path d="M6 10.5V13.5M2 13.5Q2 16 6 16Q10 16 10 13.5" />
            </svg>
            PLOT
          </ToolButton>
          <ToolButton $w={89} $pad={24} $ls={-0.35}>
            <svg width="14" height="16" viewBox="0 0 14 16">
              <path d="M0.5 15.5L2.5 10.5H11.5L13.5 15.5Z" fill="#fff" />
              <path d="M7 13.5L3.3 7.2A4.4 4.4 0 1 1 10.7 7.2Z" fill="#fff" stroke="#5a95cc" strokeWidth="0.6" />
              <circle cx="7" cy="4.8" r="1.8" fill="#5a95cc" />
            </svg>
            POI
          </ToolButton>
          <ToolButton $w={125} $pad={15} $gap={6} $ls={-0.35}>
            <svg width="16" height="16" viewBox="0 0 16 16" fill="none" stroke="#fff" strokeWidth="1.5">
              <path d="M3.5 14L1.6 10.6A2.4 2.4 0 1 1 5.4 10.6Z" />
              <path d="M12 9.6L9.5 5.4A3 3 0 1 1 14.5 5.4Z" />
              <circle cx="12" cy="3.8" r="0.8" fill="#fff" />
              <path d="M4.5 14.8Q8.5 14.5 8.2 12Q8.2 10.2 11 10" />
            </svg>
            DIRECTION
          </ToolButton>
          <ToolButton $w={34} $pad={13} $last>
            <svg width="5" height="16" viewBox="0 0 5 16" fill="#fff">
              <circle cx="2.5" cy="2.4" r="2.1" /><circle cx="2.5" cy="8" r="2.1" /><circle cx="2.5" cy="13.6" r="2.1" />
            </svg>
          </ToolButton>
          <CollapseTab $w={17} $side="right">
            <svg width="10" height="14" viewBox="0 0 10 14"><path d="M8.2 1.6L2.6 7L8.2 12.4" fill="none" stroke="#333" strokeWidth="2.8" /></svg>
          </CollapseTab>
        </Toolbar>

        <LayerPanel>
          <LayerHeader $h={41} $gap={5} $bg="#f0efec" $color="#3a3a3a" $ls={0.15}>
            <LayerIcon $pad="14px 0 0 3px">
              <svg width="17" height="18" viewBox="0 0 17 18">
                <path d="M8.5 0.5L16.5 5L8.5 9.5L0.5 5Z" fill="#fff" />
                <path d="M0.8 7.8L8.5 12.2L16.2 7.8M0.8 10.8L8.5 15.2L16.2 10.8" fill="none" stroke="#fff" strokeWidth="1.5" />
              </svg>
            </LayerIcon>
            <LayerTitle>Layer Menu</LayerTitle>
          </LayerHeader>
          <LayerHeader $h={38} $bg="#4a9a49" $color="#fff" $ls={0.15} $bold>
            <LayerIcon $pad="9px 4px 0 0">
              <svg width="17" height="17" viewBox="0 0 17 17">
                <path d="M8.5 2L10.3 6.5L15 6.9L11.4 10L12.5 14.6L8.5 12.1L4.5 14.6L5.6 10L2 6.9L6.7 6.5Z" fill="none" stroke="#fff" strokeWidth="1.9" />
              </svg>
            </LayerIcon>
            <LayerTitle $drop={2}>Industry</LayerTitle>
            <CloseIcon width="14" height="14" viewBox="0 0 14 14">
              <path d="M1 1L13 13M13 1L1 13" stroke="#222" strokeWidth="1.1" />
            </CloseIcon>
          </LayerHeader>
          <SelectAllRow><Check on />Select All</SelectAllRow>
          <LayerList>
            <LayerRow>
              <Check on />Blank
              <LegendIcon $drop={2} width="20" height="28" viewBox="-10 -10 20 28"><StarPin x={-0.4} y={0} /></LegendIcon>
            </LayerRow>
            <LayerRow>
              <Check on />Banking
              <LegendIcon $drop={2} width="20" height="28" viewBox="-10 -6 20 28"><FlagPin x={0} y={0} /></LegendIcon>
            </LayerRow>
          </LayerList>
        </LayerPanel>

        <RoadSwitch>
          <CollapseTab $w={16} $side="left">
            <svg width="10" height="14" viewBox="0 0 10 14"><path d="M2.2 1.6L7.8 7L2.2 12.4" fill="none" stroke="#333" strokeWidth="2.8" /></svg>
          </CollapseTab>
          <RoadButton>
            <svg width="26" height="26" viewBox="0 0 26 26">
              <rect x="1" y="1" width="24" height="24" fill="#efece6" stroke="#111" strokeWidth="2" />
              <path d="M2 14L24 4M8 2L20 24M14 2L24 18M2 20L14 10M18 2L10 12" stroke="#c9bfae" strokeWidth="1" fill="none" />
              <path d="M7 7Q8 3 14 2" stroke="#f5b456" strokeWidth="1.8" fill="none" />
              <path d="M2 9Q7 9 10 14Q15 21 24 21" stroke="#a988c9" strokeWidth="2.6" fill="none" />
            </svg>
            <RoadLabel>Road</RoadLabel>
          </RoadButton>
        </RoadSwitch>

        <GlobeBadge width="38" height="40" viewBox="0 0 38 40">
          <path d="M35 25.5A16.4 16.4 0 1 1 30 7" fill="none" stroke="#0b3d91" strokeWidth="3.2" />
          <path d="M26 9.5L35 7L33.5 15Z" fill="#0b3d91" />
          <circle cx="19" cy="19.8" r="12.4" fill="#eef1f6" />
          <path d="M8 15Q11 9 17 8L21 8.5L19 11L22 13L18 15L17 18L14 18.5L13 17L11 18ZM13 19L19 20.5L20 24L17 27L16 31L13.5 28L12.5 23ZM23 8.5Q28 10 30 14L27 15L24 13ZM23 17L31 19L29 26L26 28L23 22Z" fill="#0b3d91" />
          <path d="M27 28L22.6 20A5.6 5.6 0 1 1 31.6 20Z" fill="#0b3d91" stroke="#fff" strokeWidth="0.9" />
          <circle cx="27.2" cy="17.4" r="3.6" fill="#f47b20" />
        </GlobeBadge>
        <ZoomStack>
          <ZoomButton aria-label="Zoom in">
            <svg width="18" height="18" viewBox="0 0 18 18"><path d="M0.5 9H17.5M9 0.5V17.5" stroke="#333" strokeWidth="1.6" /></svg>
          </ZoomButton>
          <ZoomButton aria-label="Zoom out">
            <svg width="18" height="18" viewBox="0 0 18 18"><path d="M0.5 9H17.5" stroke="#333" strokeWidth="1.6" /></svg>
          </ZoomButton>
        </ZoomStack>

        <HideBar>
          <HideButton $w={17} $pad={5}>
            <svg width="7" height="14" viewBox="0 0 7 14"><path d="M3.5 2V12" stroke="#333" strokeWidth="1.4" /><path d="M0.3 4L3.5 0L6.7 4ZM0.3 10L3.5 14L6.7 10Z" fill="#333" /></svg>
          </HideButton>
          <HideButton $w={110} $pad={17}>
            <svg width="12" height="13" viewBox="0 0 12 13">
              <rect x="0.6" y="0.6" width="10.8" height="11.8" fill="none" stroke="#333" strokeWidth="1.2" />
              <path d="M1 2H11" stroke="#333" strokeWidth="1.4" />
              <path d="M2.5 4.5H4M5 4.5H9.8M2.5 6.5H4M5 6.5H9.8M2.5 8.5H4M5 8.5H9.8M2.5 10.5H4M5 10.5H9.8" stroke="#333" strokeWidth="1" />
            </svg>
            Hide Data
          </HideButton>
        </HideBar>
      </MapPanel>

      <DataArea>
        <DataHeader>
          <DataTitle>Accounts - New York (350)</DataTitle>
          <ActionButton $w={76} $pad={11} $gap={2} $ls={-0.1}>
            <svg width="15" height="15" viewBox="0 0 15 15" fill="none" stroke="#fff" strokeWidth="1.9">
              <path d="M1.4 7A6 6 0 0 1 12 3.6M13.6 8A6 6 0 0 1 3 11.4" />
              <path d="M9.5 5.6H14.4V0.8ZM5.5 9.4H0.6V14.2Z" fill="#fff" stroke="none" />
            </svg>
            Reset
          </ActionButton>
          <ActionButton $w={163} $pad={13} $gap={5}>
            <svg width="16" height="13" viewBox="0 0 16 13" fill="#fff">
              <path d="M1 2.4H3V4.4H1ZM4 2.4H11V0L16 3.4L11 6.8V4.4H4ZM13 8.6H15V10.6H13ZM12 8.6H5V6.2L0 9.6L5 13V10.6H12Z" />
            </svg>
            Related Records
          </ActionButton>
          <ActionButton $w={131} $pad={10} $gap={5} $ls={0.1}>
            <svg width="8" height="8" viewBox="0 0 8 8"><path d="M0.5 7.5H7.5L4 4Z" fill="#fff" /></svg>
            Mass Actions
          </ActionButton>
        </DataHeader>

        <Grid>
          <HeadRow>
            <HeadCell />
            <HeadCell $center><Check on /></HeadCell>
            {headers.map(([t, right, ls]) => (
              <HeadCell key={t} $right={right} $ls={ls}>{t}<Funnel /></HeadCell>
            ))}
            <HeadCell />
          </HeadRow>
          <Viewport>
            <Rows>
              {data.map((r, i) => (
                <Row key={r[0]} $alt={i % 2 === 1}>
                  <Cell $icon><StackIcon /></Cell>
                  <Cell $box><Check on={i === 10} /></Cell>
                  {r.map((v, j) => (
                    <Cell key={j} $num={j === 4 || j === 7} $ls={spacingFor(v, j)}>{v}</Cell>
                  ))}
                </Row>
              ))}
            </Rows>
            <VScroll>
              <Arrow><Tri dir="up" s={10} color="#a3a3a3" /></Arrow>
              <Thumb $w={13} $h={22} />
              <Arrow $push="top"><Tri dir="down" s={10} /></Arrow>
            </VScroll>
          </Viewport>
          <HScroll>
            <Arrow><Tri dir="left" s={10} color="#a3a3a3" /></Arrow>
            <Thumb $w={921} $h={13} />
            <Arrow $push="left"><Tri dir="right" s={10} /></Arrow>
            <Corner />
          </HScroll>
          <Pager>
            <PageButton $off><PageGlyph kind="first" /></PageButton>
            <PageButton $off><PageGlyph kind="prev" /></PageButton>
            <CurrentPage>1</CurrentPage>
            <PageLink>2</PageLink>
            <PageButton><PageGlyph kind="next" /></PageButton>
            <PageButton><PageGlyph kind="last" /></PageButton>
            <SizeSelect>200<Tri dir="drop" s={10} color="#5d6673" /></SizeSelect>
            <PagerText>items per page</PagerText>
            <PagerInfo>1 - 200 of 350 items</PagerInfo>
          </Pager>
        </Grid>
      </DataArea>
    </Screen>
  );
}
